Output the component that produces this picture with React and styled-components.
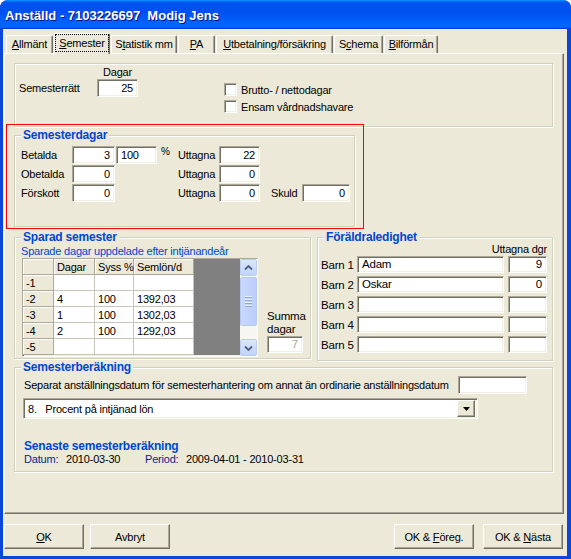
import React from 'react';
import styled, { createGlobalStyle, css } from 'styled-components';

const GlobalStyle = createGlobalStyle`
  html, body { margin: 0; padding: 0; background: #fff; }
  body {
    font-family: "Liberation Sans", Arial, sans-serif;
    font-size: 11px;
    letter-spacing: -0.2px;
    color: #000;
  }
  * { box-sizing: border-box; }
`;

const FACE = '#ECE9D8';
const BLUE = '#0046D5';

const sunken = css`
  border: 1px solid;
  border-color: #aca899 #fff #fff #aca899;
  box-shadow: inset 1px 1px 0 #716f64, inset -1px -1px 0 #f1efe2;
`;

const raised = css`
  border: 1px solid;
  border-color: #fff #716f64 #716f64 #fff;
  box-shadow: inset -1px -1px 0 #aca899;
`;

const Window = styled.div`
  width: 571px;
  height: 559px;
  display: flex;
  flex-direction: column;
  background: #0a46d8;
  border-radius: 8px 8px 0 0;
  overflow: hidden;
`;

const TitleBar = styled.div`
  flex: none;
  height: 29px;
  display: flex;
  align-items: center;
  padding: 1px 0 0 5px;
  background: linear-gradient(180deg, #0997ff, #0053ee 8%, #0050ee 40%, #06f 88%, #06f 93%, #005bff 95%, #003dd7 96%, #003dd7);
  color: #fff;
  font-weight: bold;
  font-size: 13px;
  letter-spacing: 0;
  white-space: pre;
  text-shadow: 1px 1px 0 #0f1089;
`;

const Client = styled.div`
  flex: 1;
  margin: 0 4px 3px 3px;
  background: ${FACE};
  display: flex;
  flex-direction: column;
  padding-top: 4px;
`;

const TabRow = styled.div`
  position: relative;
  z-index: 1;
  display: flex;
  align-items: flex-end;
  height: 21px;
  margin-bottom: -1px;
  padding-left: 2px;
`;

const Tab = styled.div`
  width: ${(p) => p.$w}px;
  height: ${(p) => (p.$active ? 21 : 18)}px;
  margin-left: 1px;
  margin-bottom: ${(p) => (p.$active ? 0 : 1)}px;
  background: ${FACE};
  border: 1px solid;
  border-color: #fff #716f64 transparent #fff;
  border-bottom: none;
  border-radius: 2px 2px 0 0;
  box-shadow: inset -1px 0 0 #aca899;
  display: flex;
  align-items: center;
  justify-content: center;
  padding-bottom: ${(p) => (p.$active ? 2 : 1)}px;
  white-space: nowrap;
`;

const TabLabel = styled.span`
  ${(p) =>
    p.$active &&
    css`
      align-self: stretch;
      flex: 1;
      display: flex;
      align-items: center;
      justify-content: center;
      outline: 1px dotted #000;
      outline-offset: -1px;
    `}
`;

const Panel = styled.div`
  position: relative;
  margin-left: 1px;
  width: 560px;
  height: 461px;
  ${raised}
  padding: 9px 0 0 9px;
  display: flex;
  flex-direction: column;
`;

const Marker = styled.div`
  position: absolute;
  left: 1px;
  top: 70px;
  width: 358px;
  height: 105px;
  border: 1px solid #ff0000;
  z-index: 2;
  pointer-events: none;
`;

const Group = styled.div`
  flex: none;
  width: ${(p) => p.$w}px;
  height: ${(p) => p.$h}px;
  margin-top: ${(p) => p.$mt || 0}px;
  border: 1px solid #d0d0bf;
  box-shadow: inset 1px 1px 0 #fff, 1px 1px 0 #fff;
  display: flex;
  flex-direction: column;
`;

const Legend = styled.div`
  align-self: flex-start;
  margin: -8px 0 0 6px;
  padding: 0 2px;
  height: 14px;
  line-height: 14px;
  background: ${FACE};
  color: ${BLUE};
  font-weight: bold;
  font-size: 12px;
  white-space: nowrap;
`;

const Field = styled.div`
  flex: none;
  width: ${(p) => p.$w}px;
  height: ${(p) => p.$h || 18}px;
  margin-left: ${(p) => p.$ml || 0}px;
  ${sunken}
  background: #fff;
  color: ${(p) => (p.$disabled ? '#aca899' : '#000')};
  padding: 0 4px;
  text-align: ${(p) => p.$align || 'left'};
  line-height: ${(p) => (p.$h || 18) - 2}px;
  white-space: nowrap;
  overflow: hidden;
`;

const Label = styled.span`
  flex: none;
  width: ${(p) => (p.$w ? `${p.$w}px` : 'auto')};
  padding-left: ${(p) => p.$pl || 0}px;
  white-space: nowrap;
  color: ${(p) => p.$color || 'inherit'};
`;

/* --- Semesterrätt block --- */

const RightsRow = styled.div`
  display: flex;
  padding: 2px 0 0 4px;
`;

const RightsGrid = styled.div`
  display: grid;
  grid-template-columns: 78px 41px;
  grid-template-rows: 13px 18px;
  align-items: center;
`;

const Caption = styled.span`
  text-align: center;
  line-height: 13px;
`;

const CheckList = styled.div`
  display: flex;
  flex-direction: column;
  margin: 15px 0 0 86px;
`;

const CheckRow = styled.label`
  display: flex;
  align-items: center;
  height: 17px;
  gap: 4px;
`;

const Box = styled.span`
  width: 13px;
  height: 13px;
  ${sunken}
  background: #fff;
`;

/* --- Semesterdagar --- */

const DayRows = styled.div`
  display: flex;
  flex-direction: column;
  gap: 1px;
  margin-top: 4px;
  padding-left: 6px;
`;

const DayRow = styled.div`
  display: flex;
  align-items: center;
  height: 18px;
`;

const Spacer = styled.span`
  flex: none;
  width: ${(p) => p.$w}px;
`;

const Unit = styled.span`
  flex: none;
  width: 21px;
  padding-left: 4px;
  align-self: flex-start;
  font-size: 10px;
  line-height: 12px;
`;

/* --- Sparad semester --- */

const Row = styled.div`
  display: flex;
  align-items: flex-start;
  gap: 6px;
  margin-top: ${(p) => p.$mt || 0}px;
`;

const Subtitle = styled.div`
  color: ${BLUE};
  line-height: 14px;
  padding-left: 6px;
  white-space: nowrap;
`;

const SavedBody = styled.div`
  display: flex;
  align-items: flex-end;
  padding-left: 7px;
`;

const GridBox = styled.div`
  width: 236px;
  height: 99px;
  ${sunken}
  display: flex;
  overflow: hidden;
  background: #fff;
`;

const Table = styled.div`
  flex: 1;
  display: grid;
  grid-template-columns: 31px 41px 39px 60px 1fr;
  grid-template-rows: repeat(6, 16px);
  align-content: start;
`;

const Cell = styled.div`
  display: flex;
  align-items: flex-end;
  padding: 0 0 1px 3px;
  white-space: nowrap;
  border-right: 1px solid ${(p) => (p.$head ? '#aca899' : '#c8c5b8')};
  border-bottom: 1px solid ${(p) => (p.$head ? '#aca899' : '#c8c5b8')};
  background: ${(p) => (p.$head ? FACE : '#fff')};
  ${(p) => p.$head && css`box-shadow: inset 1px 1px 0 #fff;`}
`;

const Void = styled.div`
  grid-column: 5;
  grid-row: 1 / -1;
  background: #808080;
`;

const Scrollbar = styled.div`
  width: 17px;
  display: flex;
  flex-direction: column;
  background: #f7f6f1;
`;

const ScrollButton = styled.div`
  flex: none;
  width: 17px;
  height: 17px;
  border: 1px solid #b9cdf6;
  border-radius: 2px;
  background: linear-gradient(180deg, #dce6fd, #c1d3fb);
  display: flex;
  align-items: center;
  justify-content: center;
`;

const Track = styled.div`
  flex: 1;
  padding: 1px 0 13px;
  display: flex;
`;

const Thumb = styled.div`
  flex: 1;
  border: 1px solid #b5c8f3;
  border-radius: 2px;
  background: linear-gradient(90deg, #c9d8fc, #bccffa);
  display: flex;
  flex-direction: column;
  align-items: center;
  justify-content: center;
  gap: 1px;
`;

const Grip = styled.span`
  width: 7px;
  height: 1px;
  background: #eef3fe;
  box-shadow: 0 1px 0 #8ca4d8;
  margin-bottom: 1px;
`;

const Summa = styled.div`
  display: flex;
  flex-direction: column;
  margin: 0 0 4px 9px;
  line-height: 13px;
  font-size: 11.5px;
`;

/* --- Föräldraledighet --- */

const ColHead = styled.div`
  margin-top: -1px;
  line-height: 13px;
  text-align: right;
  padding-right: 5px;
`;

const KidRows = styled.div`
  display: flex;
  flex-direction: column;
  gap: 3px;
  padding-left: 3px;
`;

const KidRow = styled.div`
  display: flex;
  align-items: center;
  font-size: 11.5px;
`;

/* --- Semesterberäkning --- */

const CalcBody = styled.div`
  display: flex;
  flex-direction: column;
  padding-left: 9px;
`;

const DateRow = styled.div`
  display: flex;
  align-items: center;
  margin-top: 2px;
`;

const Select = styled.div`
  width: 455px;
  height: 21px;
  margin: 4px 0 0 -1px;
  ${sunken}
  background: #fff;
  display: flex;
  align-items: center;
  padding: 1px 2px 1px 4px;
`;

const SelectText = styled.span`
  flex: 1;
  white-space: pre;
`;

const DropButton = styled.span`
  width: 18px;
  height: 17px;
  background: ${FACE};
  ${raised}
  display: flex;
  align-items: center;
  justify-content: center;
`;

const SubHeading = styled.div`
  margin-top: 20px;
  color: ${BLUE};
  font-weight: bold;
  font-size: 12px;
  line-height: 14px;
`;

const InfoRow = styled.div`
  display: flex;
  line-height: 13px;
  white-space: pre;
`;

/* --- Buttons --- */

const ButtonRow = styled.div`
  display: flex;
  margin-top: 10px;
  padding: 0 4px 0 1px;
`;

const Button = styled.button`
  width: 80px;
  height: 25px;
  margin-left: ${(p) => (p.$push ? 'auto' : `${p.$ml || 0}px`)};
  padding: 0;
  background: ${FACE};
  ${raised}
  font: inherit;
  letter-spacing: inherit;
  color: #000;
`;

const Chevron = ({ down }) => (
  <svg width="9" height="6" viewBox="0 0 9 6">
    <path
      d={down ? 'M1 1.5 L4.5 5 L8 1.5' : 'M1 4.5 L4.5 1 L8 4.5'}
      fill="none"
      stroke="#4d6185"
      strokeWidth="1.8"
    />
  </svg>
);

const tabs = [
  { w: 47, label: <><u>A</u>llmänt</> },
  { w: 56, label: <><u>S</u>emester</>, active: true },
  { w: 66, label: <>S<u>t</u>atistik mm</> },
  { w: 37, label: <><u>P</u>A</> },
  { w: 117, label: <><u>U</u>tbetalning/försäkring</> },
  { w: 49, label: <>S<u>c</u>hema</> },
  { w: 54, label: <><u>B</u>ilförmån</> },
];

const savedRows = [
  ['-1', '', '', ''],
  ['-2', '4', '100', '1392,03'],
  ['-3', '1', '100', '1302,03'],
  ['-4', '2', '100', '1292,03'],
  ['-5', '', '', ''],
];

const kids = [
  ['Barn 1', 'Adam', '9'],
  ['Barn 2', 'Oskar', '0'],
  ['Barn 3', '', ''],
  ['Barn 4', '', ''],
  ['Barn 5', '', ''],
];

export default function App() {
  return (
    <>
      <GlobalStyle />
      <Window>
        <TitleBar>Anställd - 7103226697  Modig Jens</TitleBar>
        <Client>
          <TabRow>
            {tabs.map((t, i) => (
              <Tab key={i} $w={t.w} $active={t.active}>
                <TabLabel $active={t.active}>{t.label}</TabLabel>
              </Tab>
            ))}
          </TabRow>
          <Panel>
            <Marker />

            <Group $w={539} $h={64}>
              <RightsRow>
                <RightsGrid>
                  <span />
                  <Caption>Dagar</Caption>
                  <Label>Semesterrätt</Label>
                  <Field $w={41} $align="right">25</Field>
                </RightsGrid>
                <CheckList>
                  <CheckRow><Box />Brutto- / nettodagar</CheckRow>
                  <CheckRow><Box />Ensam vårdnadshavare</CheckRow>
                </CheckList>
              </RightsRow>
            </Group>

            <Group $w={341} $h={92} $mt={8}>
              <Legend>Semesterdagar</Legend>
              <DayRows>
                <DayRow>
                  <Label $w={51}>Betalda</Label>
                  <Field $w={43} $align="right">3</Field>
                  <Field $w={41} $ml={1}>100</Field>
                  <Unit>%</Unit>
                  <Label $w={41}>Uttagna</Label>
                  <Field $w={41} $align="right">22</Field>
                </DayRow>
                <DayRow>
                  <Label $w={51}>Obetalda</Label>
                  <Field $w={43} $align="right">0</Field>
                  <Spacer $w={63} />
                  <Label $w={41}>Uttagna</Label>
                  <Field $w={41} $align="right">0</Field>
                </DayRow>
                <DayRow>
                  <Label $w={51}>Förskott</Label>
                  <Field $w={43} $align="right">0</Field>
                  <Spacer $w={63} />
                  <Label $w={41}>Uttagna</Label>
                  <Field $w={41} $align="right">0</Field>
                  <Label $w={42} $pl={11}>Skuld</Label>
                  <Field $w={48} $align="right">0</Field>
                </DayRow>
              </DayRows>
            </Group>

            <Row $mt={10}>
              <Group $w={297} $h={122}>
                <Legend>Sparad semester</Legend>
                <Subtitle>Sparade dagar uppdelade efter intjänandeår</Subtitle>
                <SavedBody>
                  <GridBox>
                    <Table>
                      <Cell $head />
                      <Cell $head>Dagar</Cell>
                      <Cell $head>Syss %</Cell>
                      <Cell $head>Semlön/d</Cell>
                      <Void />
                      {savedRows.map((r) => (
                        <React.Fragment key={r[0]}>
                          <Cell $head>{r[0]}</Cell>
                          <Cell>{r[1]}</Cell>
                          <Cell>{r[2]}</Cell>
                          <Cell>{r[3]}</Cell>
                        </React.Fragment>
                      ))}
                    </Table>
                    <Scrollbar>
                      <ScrollButton><Chevron /></ScrollButton>
                      <Track>
                        <Thumb>
                          <Grip />
                          <Grip />
                          <Grip />
                          <Grip />
                        </Thumb>
                      </Track>
                      <ScrollButton><Chevron down /></ScrollButton>
                    </Scrollbar>
                  </GridBox>
                  <Summa>
                    <span>Summa</span>
                    <span>dagar</span>
                    <Field $w={36} $h={17} $align="right" $disabled>7</Field>
                  </Summa>
                </SavedBody>
              </Group>

              <Group $w={236} $h={124}>
                <Legend>Föräldraledighet</Legend>
                <ColHead>Uttagna dgr</ColHead>
                <KidRows>
                  {kids.map(([label, name, days]) => (
                    <KidRow key={label}>
                      <Label $w={36}>{label}</Label>
                      <Field $w={147} $h={17}>{name}</Field>
                      <Field $w={39} $h={17} $ml={4} $align="right">{days}</Field>
                    </KidRow>
                  ))}
                </KidRows>
              </Group>
            </Row>

            <Group $w={539} $h={105} $mt={6}>
              <Legend>Semesterberäkning</Legend>
              <CalcBody>
                <DateRow>
                  <Label $w={434}>
                    Separat anställningsdatum för semesterhantering om annat än ordinarie anställningsdatum
                  </Label>
                  <Field $w={69} />
                </DateRow>
                <Select>
                  <SelectText>8.   Procent på intjänad lön</SelectText>
                  <DropButton>
                    <svg width="7" height="4" viewBox="0 0 7 4">
                      <path d="M0 0 H7 L3.5 4 Z" fill="#000" />
                    </svg>
                  </DropButton>
                </Select>
                <SubHeading>Senaste semesterberäkning</SubHeading>
                <InfoRow>
                  <Label $w={42} $color="#0b1f8c">Datum:</Label>
                  <Label $w={79}>2010-03-30</Label>
                  <Label $w={41} $color="#0b1f8c">Period:</Label>
                  <Label>2009-04-01 -  2010-03-31</Label>
                </InfoRow>
              </CalcBody>
            </Group>
          </Panel>

          <ButtonRow>
            <Button><u>O</u>K</Button>
            <Button $ml={6}>Avbryt</Button>
            <Button $push>OK &amp; <u>F</u>öreg.</Button>
            <Button $ml={9}>OK &amp; <u>N</u>ästa</Button>
          </ButtonRow>
        </Client>
      </Window>
    </>
  );
}
